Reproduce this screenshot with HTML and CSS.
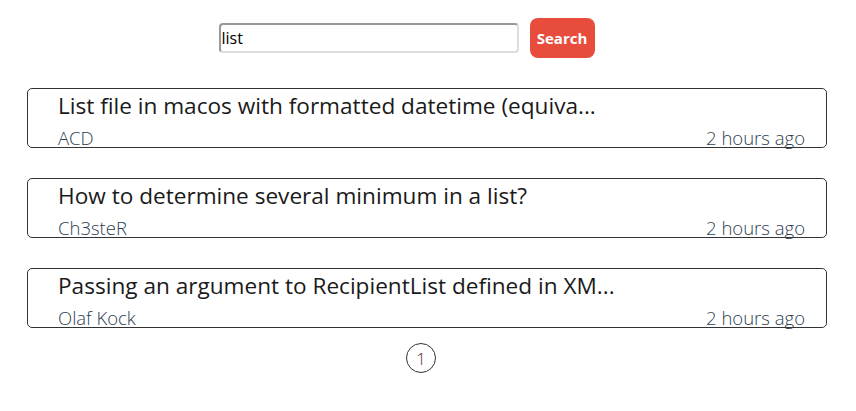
FILE: index.html
```html
<!DOCTYPE html>
<html>
<head>
<meta charset="utf-8">
<link rel="stylesheet" href="styles.css">
</head>
<body>
<form class="search">
  <input class="search-input" type="text" value="list">
  <button class="search-btn" type="button">Search</button>
</form>
<div class="list">
  <div class="card">
    <div class="title">List file in macos with formatted datetime (equiva...</div>
    <div class="meta"><span class="author">ACD</span><span class="time">2 hours ago</span></div>
  </div>
  <div class="card">
    <div class="title">How to determine several minimum in a list?</div>
    <div class="meta"><span class="author">Ch3steR</span><span class="time">2 hours ago</span></div>
  </div>
  <div class="card">
    <div class="title">Passing an argument to RecipientList defined in XM...</div>
    <div class="meta"><span class="author">Olaf Kock</span><span class="time">2 hours ago</span></div>
  </div>
</div>
<div class="pager"><span class="page">1</span></div>
</body>
</html>
```
FILE: styles.css
```css
body {
  margin: 0;
  padding: 18px 0 0;
  font-family: "Open Sans", "Noto Sans", sans-serif;
  background: #fff;
}
.search {
  display: flex;
  justify-content: center;
  align-items: center;
  gap: 11px;
  margin: 0;
  padding-right: 43px;
}
.search-input {
  width: 300px;
  height: 30px;
  box-sizing: border-box;
  border: 2px solid #ddd;
  border-top-color: #999;
  border-left-color: #999;
  border-radius: 4px;
  padding: 0 1px;
  font-family: "Open Sans", sans-serif;
  font-size: 16px;
  color: #000;
  outline: none;
}
.search-btn {
  width: 65px;
  height: 40px;
  border: none;
  border-radius: 8px;
  background: #e74c3c;
  color: #fff;
  font-family: "Open Sans", sans-serif;
  font-weight: 700;
  font-size: 15px;
  padding: 0;
}
.list {
  display: flex;
  flex-direction: column;
  gap: 30px;
  margin-top: 30px;
  align-items: center;
  padding-right: 2px;
}
.card {
  width: 800px;
  height: 60px;
  box-sizing: border-box;
  border: 1px solid #333;
  border-radius: 5px;
  padding: 0 21px 0 30px;
}
.title {
  font-size: 22.6px;
  line-height: 34px;
  color: #1a1a1a;
  white-space: nowrap;
}
.meta {
  display: flex;
  justify-content: space-between;
  font-size: 18.5px;
  font-weight: 300;
  line-height: 28px;
  margin-top: 1px;
  color: #2c3e50;
}
.pager {
  display: flex;
  justify-content: center;
  margin-top: 15px;
  padding-right: 14px;
}
.page {
  width: 28px;
  height: 28px;
  border: 1px solid #333;
  border-radius: 50%;
  display: flex;
  align-items: center;
  justify-content: center;
  font-size: 17px;
  font-weight: 300;
  color: #5a2a2a;
}
```
